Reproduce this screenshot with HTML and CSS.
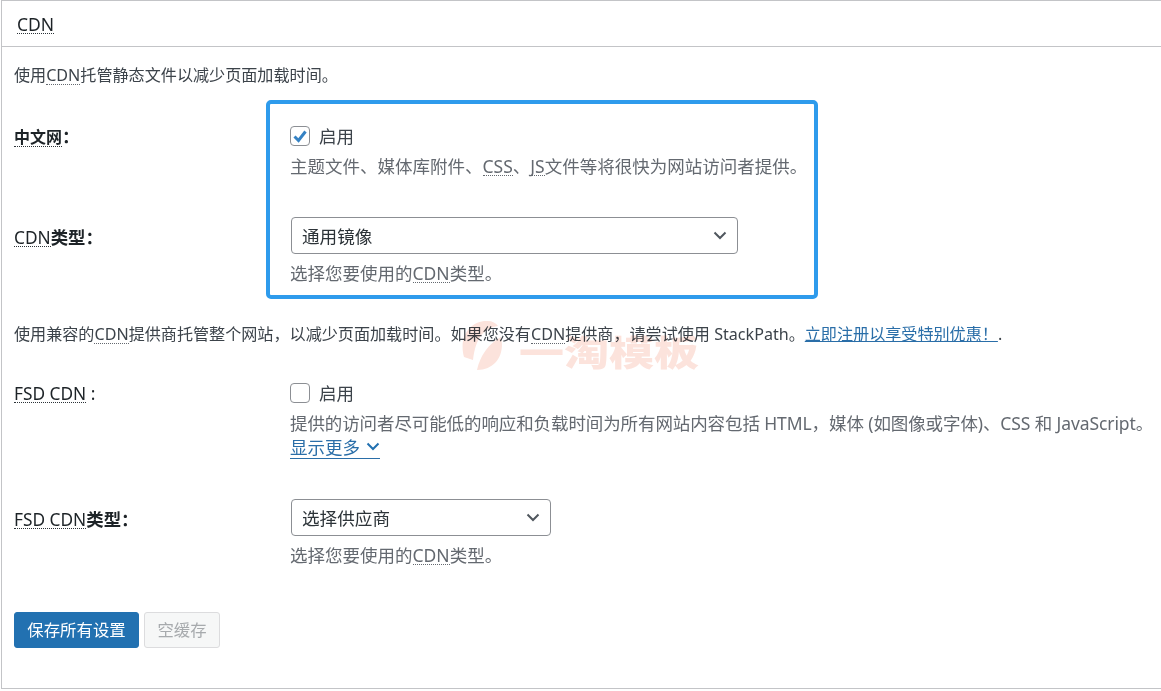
FILE: index.html
```html
<!DOCTYPE html>
<html lang="zh">
<head>
<meta charset="utf-8">
<title>CDN</title>
<link rel="stylesheet" href="styles.css">
</head>
<body>
<main class="panel">
  <h2 class="panel-title"><abbr>CDN</abbr></h2>
  <div class="panel-body">
    <p class="intro">使用<abbr>CDN</abbr>托管静态文件以减少页面加载时间。</p>

    <div class="row row-enable">
      <div class="label"><abbr class="abbr-bold">中文网</abbr>：</div>
      <div class="field">
        <label class="check"><input type="checkbox" checked><span>启用</span></label>
        <p class="help help-check">主题文件、媒体库附件、<abbr>CSS</abbr>、<abbr>JS</abbr>文件等将很快为网站访问者提供。</p>
      </div>
    </div>

    <div class="row row-type">
      <div class="label label-select"><abbr>CDN</abbr>类型：</div>
      <div class="field">
        <select class="select select-wide"><option>通用镜像</option></select>
        <p class="help help-select">选择您要使用的<abbr>CDN</abbr>类型。</p>
      </div>
    </div>

    <p class="intro intro-full">使用兼容的<abbr>CDN</abbr>提供商托管整个网站，以减少页面加载时间。如果您没有<abbr>CDN</abbr>提供商，请尝试使用 StackPath。<a href="#">立即注册以享受特别优惠！</a>.</p>

    <div class="row row-fsd">
      <div class="label label-plain"><abbr>FSD CDN</abbr> :</div>
      <div class="field">
        <label class="check"><input type="checkbox"><span>启用</span></label>
        <p class="help help-check help-long">提供的访问者尽可能低的响应和负载时间为所有网站内容包括 HTML，媒体 (如图像或字体)、CSS 和 JavaScript。</p>
        <a class="more" href="#">显示更多 <svg class="chev" viewBox="0 0 14 9" width="14" height="9"><path d="M1.5 1.5 7 7l5.5-5.5" fill="none" stroke="#2271b1" stroke-width="2"/></svg></a>
      </div>
    </div>

    <div class="row row-fsd-type">
      <div class="label label-select"><abbr>FSD CDN</abbr>类型：</div>
      <div class="field">
        <select class="select select-narrow"><option>选择供应商</option></select>
        <p class="help help-select">选择您要使用的<abbr>CDN</abbr>类型。</p>
      </div>
    </div>

    <div class="actions">
      <button class="btn btn-primary" type="button">保存所有设置</button>
      <button class="btn btn-disabled" type="button" disabled>空缓存</button>
    </div>
  </div>
  <div class="highlight"></div>
  <div class="watermark">
    <svg viewBox="0 0 40 50" width="40" height="50"><path d="M2 37C-4 15 10 0 26 1c4 0 8 2 10 5C23 8 14 16 11 40z" fill="#fce3dc"/><path d="M15 50C18 36 26 24 39 17 43 34 34 50 15 50z" fill="#fce3dc"/></svg>
    <span>一淘模板</span>
  </div>
</main>
</body>
</html>
```

FILE: styles.css
```css
* { box-sizing: border-box; }

html, body {
  margin: 0;
  background: #fff;
  overflow: hidden;
}

body {
  height: 691px;
  font-family: "Noto Sans", "Noto Sans CJK SC", sans-serif;
  font-size: 17.5px;
  line-height: 24px;
  color: #646970;
}

abbr {
  text-decoration: none;
  border-bottom: 1px dotted #2c3338;
  line-height: 17px;
  display: inline-block;
}

p { margin: 0; }

.panel {
  position: relative;
  height: 689px;
  margin-left: 1px;
  border: 1px solid #c3c4c7;
  border-right: 0;
}

.panel-title {
  height: 46px;
  margin: 0;
  padding: 11px 0 0 15px;
  border-bottom: 1px solid #c3c4c7;
  font-size: 17.5px;
  font-weight: 400;
  line-height: 24px;
  color: #1d2327;
}

.panel-body { padding: 16px 0 0 12px; }

.intro {
  font-size: 16.1px;
  color: #3c434a;
  white-space: nowrap;
}

.intro abbr, .help abbr { border-bottom-color: #646970; }

.intro-full { margin-top: 37px; }

.intro a { color: #2a6ea8; }

.row { display: flex; }

.row-enable { margin-top: 37px; }
.row-type { margin-top: 39px; }
.row-fsd { margin-top: 35px; }
.row-fsd-type { margin-top: 40px; }

.label {
  flex: 0 0 276px;
  font-size: 17.4px;
  font-weight: 700;
  color: #1d2327;
}

.label abbr { font-size: 17.3px; font-weight: 400; }
.label .abbr-bold { font-size: 16px; font-weight: 700; }
.label-plain { font-weight: 400; }
.label-select { padding-top: 8px; }

.field {
  flex: 1;
  min-width: 0;
}

.check {
  display: flex;
  align-items: center;
  gap: 9px;
  color: #3c434a;
}

.check input {
  appearance: none;
  width: 20px;
  height: 20px;
  margin: 0;
  background-color: #fff;
  border: 1px solid #8c8f94;
  border-radius: 4px;
}

.check input:checked {
  background: #fff url("data:image/svg+xml;utf8,<svg xmlns='http://www.w3.org/2000/svg' viewBox='0 0 18 18'><path d='M3.5 9.5 7.5 13.5 14.5 4.5' fill='none' stroke='%233582c4' stroke-width='3'/></svg>") center / 18px 18px no-repeat;
}

.help { white-space: nowrap; }
.help-check { margin-top: 6px; }
.help-select { margin-top: 7px; }
.help-long { letter-spacing: -0.1px; }

.more {
  display: inline-block;
  margin-top: 1px;
  color: #2a6ea8;
  text-decoration: none;
  border-bottom: 1px solid #2a6ea8;
  line-height: 22px;
}

.chev { margin-left: 1px; vertical-align: 3px; }

.select {
  appearance: none;
  display: block;
  height: 37px;
  margin-left: 1px;
  padding: 0 30px 0 10px;
  font: inherit;
  font-size: 17.6px;
  color: #2c3338;
  background: #fff url("data:image/svg+xml;utf8,<svg xmlns='http://www.w3.org/2000/svg' viewBox='0 0 14 9'><path d='M1.5 1.5 7 7l5.5-5.5' fill='none' stroke='%2350575e' stroke-width='2'/></svg>") right 10px center / 14px 9px no-repeat;
  border: 1px solid #8c8f94;
  border-radius: 4px;
}

.select-wide { width: 447px; }
.select-narrow { width: 260px; }

.actions {
  display: flex;
  gap: 5px;
  margin-top: 45px;
}

.btn {
  height: 36px;
  padding: 0;
  font: inherit;
  font-size: 16.4px;
  border-radius: 3px;
  border: 1px solid;
}

.btn-primary {
  width: 125px;
  color: #fff;
  background: #2271b1;
  border-color: #2271b1;
}

.btn-disabled {
  width: 76px;
  color: #a7aaad;
  background: #f6f7f7;
  border-color: #dcdcde;
}

.highlight {
  position: absolute;
  left: 264px;
  top: 99px;
  width: 552px;
  height: 199px;
  border: 4px solid #2e9bec;
  border-radius: 5px;
  pointer-events: none;
}

.watermark {
  position: absolute;
  left: 460px;
  top: 319px;
  display: flex;
  align-items: flex-end;
  gap: 17px;
  pointer-events: none;
  mix-blend-mode: multiply;
}

.watermark span {
  font-size: 45px;
  line-height: 44px;
  font-weight: 900;
  color: #fce3dc;
  transform: scaleY(.78);
  transform-origin: bottom;
}
```
